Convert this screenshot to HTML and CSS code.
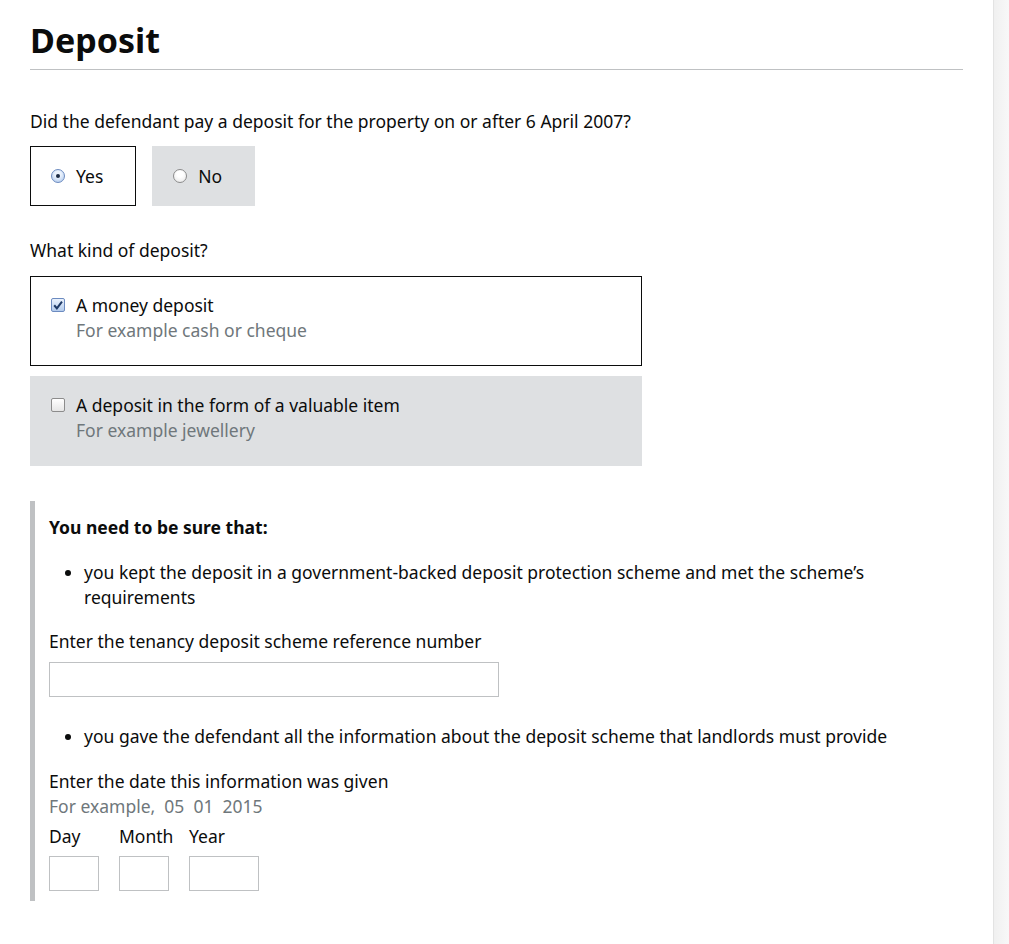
FILE: index.html
```html
<!DOCTYPE html>
<html lang="en">
<head>
<meta charset="utf-8">
<title>Deposit</title>
<link rel="stylesheet" href="styles.css">
</head>
<body>
<div class="page">
  <main class="container">
    <h1 class="heading">Deposit</h1>

    <fieldset class="fieldset q1">
      <legend class="legend">Did the defendant pay a deposit for the property on or after 6 April 2007?</legend>
      <div class="inline-options">
        <label class="option option-radio selected"><span class="radio checked"></span><span class="opt-text">Yes</span></label>
        <label class="option option-radio"><span class="radio"></span><span class="opt-text">No</span></label>
      </div>
    </fieldset>

    <fieldset class="fieldset q2">
      <legend class="legend">What kind of deposit?</legend>
      <div class="stack-options">
        <label class="option option-check selected">
          <span class="checkbox checked"><svg viewBox="0 0 13 13" width="13" height="13"><path d="M2.4 6.2 L5.3 9.6 L10.8 2.4" fill="none" stroke="#1f3a66" stroke-width="2.2"/></svg></span>
          <span class="opt-body"><span class="opt-text">A money deposit</span><span class="opt-hint">For example cash or cheque</span></span>
        </label>
        <label class="option option-check">
          <span class="checkbox"></span>
          <span class="opt-body"><span class="opt-text">A deposit in the form of a valuable item</span><span class="opt-hint">For example jewellery</span></span>
        </label>
      </div>
    </fieldset>

    <div class="panel">
      <p class="panel-title">You need to be sure that:</p>
      <ul class="bullets">
        <li>you kept the deposit in a government-backed deposit protection scheme and met the scheme’s requirements</li>
      </ul>
      <div class="field">
        <label class="field-label">Enter the tenancy deposit scheme reference number</label>
        <div class="text-input"></div>
      </div>
      <ul class="bullets bullets-second">
        <li>you gave the defendant all the information about the deposit scheme that landlords must provide</li>
      </ul>
      <div class="field date-field">
        <div class="field-label">Enter the date this information was given</div>
        <div class="field-hint">For example, &nbsp;05 &nbsp;01 &nbsp;2015</div>
        <div class="date-parts">
          <div class="date-part w-day"><span class="part-label">Day</span><span class="part-input"></span></div>
          <div class="date-part w-day"><span class="part-label">Month</span><span class="part-input"></span></div>
          <div class="date-part w-year"><span class="part-label">Year</span><span class="part-input"></span></div>
        </div>
      </div>
    </div>
  </main>
  <div class="side-strip"></div>
</div>
</body>
</html>
```

FILE: styles.css
```css
* { box-sizing: border-box; }
html, body { margin: 0; padding: 0; background: #ffffff; }
body {
  font-family: "Noto Sans", "Liberation Sans", Arial, sans-serif;
  color: #0b0c0c;
  font-size: 17.5px;
  line-height: 25px;
}
.page { display: flex; min-height: 944px; }
.container { flex: 1; padding: 0 30px 40px 30px; }
.side-strip {
  width: 16px;
  border-left: 1px solid #e3e3e3;
  background: linear-gradient(to right, #f0f0f0, #f8f8f8);
}
.heading {
  margin: 0;
  padding: 20px 0 9px;
  font-size: 34px;
  line-height: 40px;
  font-weight: 700;
  border-bottom: 1px solid #bfc1c3;
}
.fieldset { border: 0; margin: 0; padding: 0; min-width: 0; }
.legend { padding: 0; display: block; }
.q1 { margin-top: 39px; }
.q1 .legend { margin-bottom: 12px; }
.inline-options { display: flex; gap: 16px; }
.option { display: flex; align-items: flex-start; }
.option-radio {
  height: 60px;
  align-items: center;
  padding: 0 32px 0 20px;
  background: #dee0e2;
  border: 1px solid #dee0e2;
}
.option.selected { background: #ffffff; border: 1px solid #0b0c0c; }
.radio {
  width: 14px; height: 14px; border-radius: 50%;
  border: 1px solid #8c8c8c;
  background: radial-gradient(circle at 50% 35%, #ffffff 30%, #e4e4e4 100%);
  margin-right: 11px;
  position: relative;
  flex: none;
}
.radio.checked {
  border-color: #6c8bc0;
  background: radial-gradient(circle at 50% 35%, #eaf2fd 30%, #a9c4ea 100%);
}
.radio.checked::after {
  content: ""; position: absolute; left: 4px; top: 4px; width: 4px; height: 4px;
  border-radius: 50%; background: #1a2a44;
}
.q2 { margin-top: 32px; }
.q2 .legend { margin-bottom: 13px; }
.stack-options { display: flex; flex-direction: column; gap: 10px; width: 612px; }
.option-check {
  height: 90px;
  padding: 16px 20px 0 20px;
  background: #dee0e2;
  border: 1px solid #dee0e2;
}
.checkbox {
  width: 14px; height: 14px; margin-top: 5px; margin-right: 11px;
  border: 1px solid #8c8c8c; border-radius: 2px;
  background: linear-gradient(#ffffff, #e6e6e6);
  flex: none; display: flex; align-items: center; justify-content: center;
}
.checkbox.checked { border-color: #6c8bc0; background: linear-gradient(#eaf2fd, #b3cbec); }
.checkbox svg { display: block; }
.opt-body { display: flex; flex-direction: column; }
.opt-hint { color: #6f777b; }
.panel {
  margin-top: 35px;
  width: 880px;
  border-left: 5px solid #bfc1c3;
  padding: 14px 0 10px 14px;
}
.panel-title { margin: 0; font-weight: 700; }
.bullets { margin: 20px 0 0; padding-left: 35px; list-style: disc; }
.bullets-second { margin-top: 27px; }
.field { margin-top: 19px; }
.date-field { margin-top: 20px; }
.field-label { display: block; }
.text-input {
  margin-top: 8px;
  width: 450px; height: 35px;
  border: 1px solid #bfc1c3;
  background: #fff;
}
.field-hint { color: #6f777b; }
.date-parts { display: flex; gap: 20px; margin-top: 5px; }
.date-part { display: flex; flex-direction: column; gap: 7px; }
.part-label { line-height: 25px; white-space: nowrap; }
.part-input { display: block; height: 35px; border: 1px solid #bfc1c3; background: #fff; }
.w-day { width: 50px; }
.w-year { width: 70px; }
```
